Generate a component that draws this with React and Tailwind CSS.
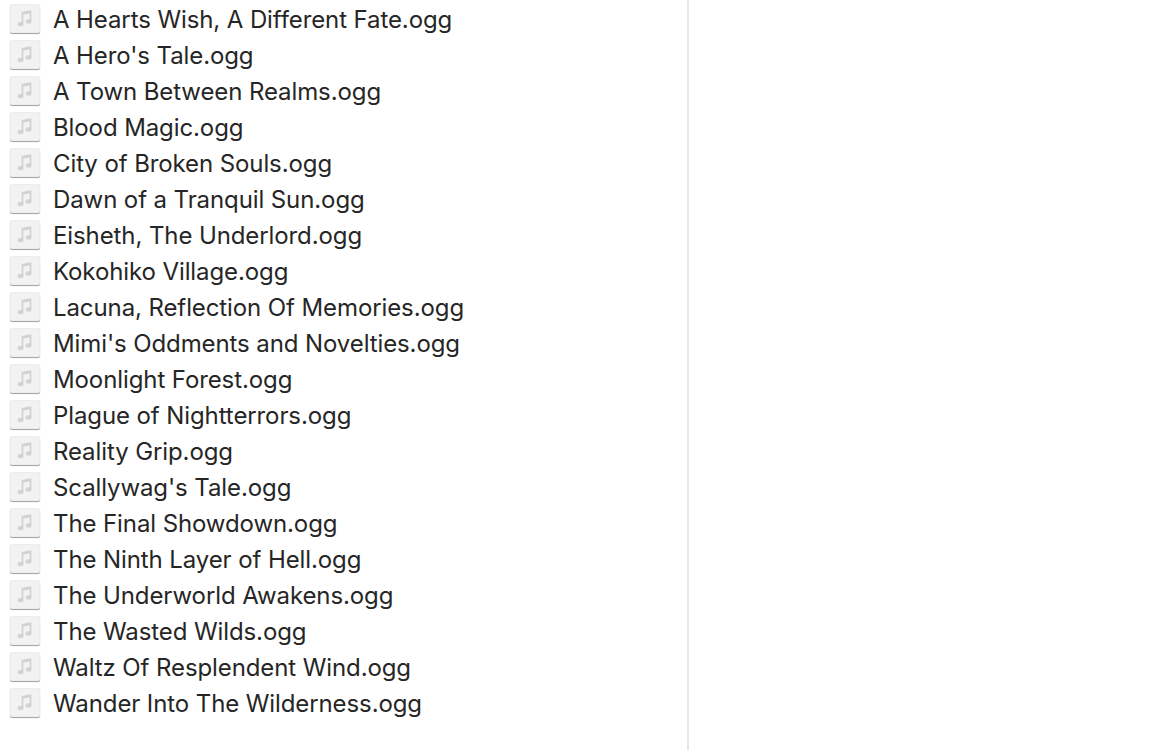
const files = [
  "A Hearts Wish, A Different Fate.ogg",
  "A Hero's Tale.ogg",
  "A Town Between Realms.ogg",
  "Blood Magic.ogg",
  "City of Broken Souls.ogg",
  "Dawn of a Tranquil Sun.ogg",
  "Eisheth, The Underlord.ogg",
  "Kokohiko Village.ogg",
  "Lacuna, Reflection Of Memories.ogg",
  "Mimi's Oddments and Novelties.ogg",
  "Moonlight Forest.ogg",
  "Plague of Nightterrors.ogg",
  "Reality Grip.ogg",
  "Scallywag's Tale.ogg",
  "The Final Showdown.ogg",
  "The Ninth Layer of Hell.ogg",
  "The Underworld Awakens.ogg",
  "The Wasted Wilds.ogg",
  "Waltz Of Resplendent Wind.ogg",
  "Wander Into The Wilderness.ogg",
];

function AudioIcon() {
  return (
    <div className="mb-[3px] flex h-[29px] w-[30px] shrink-0 items-center justify-center rounded-[2px] border border-[#ececec] bg-[#f2f2f2] shadow-[0_1px_1px_#a0a0a0]">
      <svg width="18" height="18" viewBox="0 0 18 18" fill="none">
        <path d="M6.5 13.5V2.6L14.5 1.2V11" stroke="#d2d2d2" strokeWidth="1.7" />
        <path d="M6.5 3.4L14.5 2" stroke="#d2d2d2" strokeWidth="2.4" />
        <ellipse cx="4.6" cy="14" rx="2.9" ry="2.2" fill="#d2d2d2" />
        <ellipse cx="12.6" cy="11.4" rx="2.9" ry="2.2" fill="#d2d2d2" />
      </svg>
    </div>
  );
}

export default function App() {
  return (
    <div className="flex h-[750px] w-[1160px] overflow-hidden bg-white font-['Inter',sans-serif]">
      <div className="w-[689px] border-r-2 border-[#e6e6e6] pl-[10px] pt-[2px]">
        {files.map((name) => (
          <div key={name} className="flex h-9 items-center gap-[13px]">
            <AudioIcon />
            <span className="text-[24px] leading-none tracking-[-0.1px] text-[#262626]">{name}</span>
          </div>
        ))}
      </div>
    </div>
  );
}
